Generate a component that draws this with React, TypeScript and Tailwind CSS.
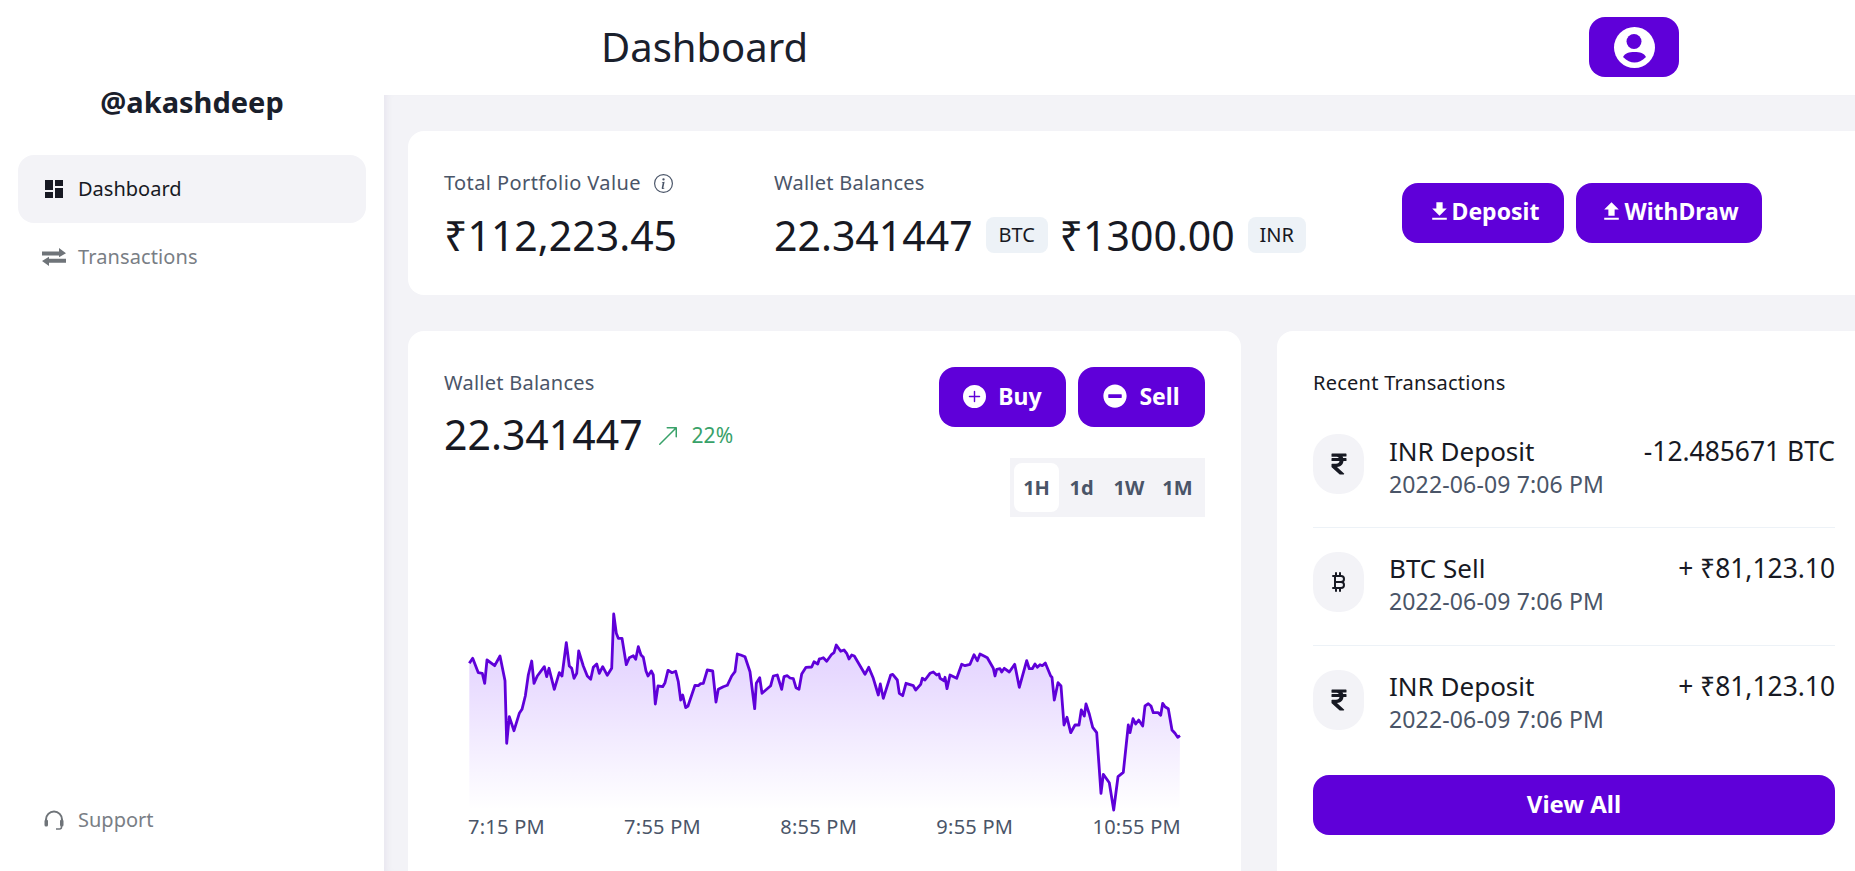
import React from "react";
import { MdDashboard, MdFileDownload, MdFileUpload } from "react-icons/md";
import { BsInfoCircle, BsArrowUpRight, BsPlusCircleFill } from "react-icons/bs";
import { FaMinusCircle, FaRupeeSign } from "react-icons/fa";
import { TbCurrencyBitcoin } from "react-icons/tb";

const left: number[][] = [[58,220],[68,205],[85,248],[97,250],[104,280],[111,210],[134,227],[150,198],[165,272],[170,460],[178,380],[192,422],[208,370],[216,358],[226,318],[235,255],[245,213],[252,280],[262,258],[283,230],[290,260],[297,235],[313,298],[328,248],[336,258],[349,158],[358,228],[365,235],[372,265],[380,250],[386,183],[400,228],[412,258],[422,268],[430,232],[440,222],[448,250],[458,230],[472,256],[485,235],[491,72],[499,130],[505,145],[516,145],[529,224],[538,203],[550,197],[557,208],[565,170],[573,195],[580,202],[588,243],[594,258],[604,243],[610,255],[616,342],[624,288],[638,290],[645,278],[654,241],[666,248],[677,244],[685,275],[692,330],[698,315],[707,353],[714,348],[735,286],[745,287],[752,281],[760,280],[772,240],[788,243],[798,336],[805,298],[820,290],[832,286],[845,258],[855,245],[862,192],[872,195],[885,200],[900,245],[914,356],[919,280],[929,263],[936,310],[962,287],[970,258],[982,255],[995,298],[1002,260],[1012,257],[1020,264],[1030,266],[1038,293],[1047,298],[1055,252],[1068,232],[1085,231],[1092,215],[1103,222],[1108,207]];
const right: number[][] = [[0,207],[10,203],[20,214],[35,193],[42,188],[49,165],[62,184],[72,180],[80,190],[87,207],[95,195],[103,198],[135,253],[146,232],[160,265],[175,315],[181,282],[190,325],[212,255],[218,253],[232,270],[238,310],[248,317],[258,280],[280,287],[287,300],[302,283],[307,265],[315,270],[330,250],[340,246],[350,255],[357,252],[360,265],[372,272],[375,262],[381,296],[390,255],[410,265],[425,223],[435,227],[450,223],[462,194],[472,212],[480,192],[492,198],[502,203],[520,235],[525,258],[530,238],[540,236],[545,246],[553,235],[568,246],[584,223],[598,292],[620,212],[628,236],[637,236],[645,222],[652,232],[660,224],[667,227],[676,219],[692,258],[696,262],[703,330],[714,278],[723,288],[732,405],[741,382],[752,428],[765,405],[777,405],[784,360],[793,378],[798,342],[808,372],[818,412],[830,428],[843,610],[850,553],[868,578],[881,660],[894,560],[910,547],[925,405],[930,428],[939,386],[947,402],[956,390],[968,408],[975,348],[985,341],[993,348],[1000,368],[1015,368],[1022,376],[1028,340],[1035,350],[1045,356],[1056,420],[1065,430],[1073,442],[1080,437]];

const pts = [
  ...left.map(([x, y]) => [450 + x / 3 - 465, 590 + y / 3 - 612]),
  ...right.map(([x, y]) => [820 + x / 3 - 465, 590 + y / 3 - 612]),
].map(([x, y]) => `${x.toFixed(1)},${y.toFixed(1)}`);
const line = pts.join(" ");
const area = `M${pts[0]} L${pts.slice(1).join(" L")} L714.5,198 L4.3,198 Z`;

function UserIcon() {
  return (
    <svg width="41" height="41" viewBox="0 0 41 41">
      <circle cx="20.5" cy="20.5" r="20.5" fill="#fff" />
      <circle cx="20" cy="14.5" r="7.5" fill="#5f00d9" />
      <path d="M9 30C11 26 15 25 20.5 25S30 26 32 30C28 34 24.5 35.5 20.5 35.5S13 34 9 30Z" fill="#5f00d9" />
    </svg>
  );
}
function SwapIcon() {
  return (
    <svg width="24" height="18" viewBox="0 0 24 18" fill="#6f7479">
      <path d="M0 3.4H17V0L24 5.2L17 9.2V7.4H0Z" />
      <path d="M24 10.8H7V8.8L0 13L7 18V14.8H24Z" />
    </svg>
  );
}
function SupportIcon() {
  return (
    <svg width="20" height="20" viewBox="0 0 20 20" fill="none">
      <path d="M2 11V9.5a8 8 0 0 1 16 0V11" stroke="#6f7479" strokeWidth="2" />
      <rect x="0.5" y="9.5" width="3.5" height="7" rx="1.5" fill="#6f7479" />
      <rect x="16" y="9.5" width="3.5" height="7" rx="1.5" fill="#6f7479" />
      <path d="M17.5 16v1a2 2 0 0 1-2 2H12" stroke="#6f7479" strokeWidth="1.6" />
    </svg>
  );
}

const rows = [
  { icon: <FaRupeeSign size={24} />, t: "INR Deposit", a: "-12.485671 BTC" },
  { icon: <TbCurrencyBitcoin size={24} strokeWidth={2} />, t: "BTC Sell", a: "+ ₹81,123.10" },
  { icon: <FaRupeeSign size={24} />, t: "INR Deposit", a: "+ ₹81,123.10" },
];

export default function App() {
  return (
    <div className="flex h-screen w-screen overflow-hidden bg-white font-['Noto_Sans',sans-serif] text-[#171923]">
      <aside className="flex w-[384px] shrink-0 flex-col px-[18px] pb-[37px] pt-[84px]">
        <h1 className="text-center text-[29px] font-bold leading-[36px] text-[#1a202c]">@akashdeep</h1>
        <nav className="mt-[35px] flex flex-col">
          <a className="flex h-[68px] items-center gap-[12px] rounded-2xl bg-[#f3f3f7] pl-[24px] text-[20px] text-[#171923]">
            <MdDashboard size={24} />
            Dashboard
          </a>
          <a className="flex h-[68px] items-center gap-[12px] pl-[24px] text-[20px] tracking-[0.1px] text-[#797e85]">
            <SwapIcon />
            Transactions
          </a>
        </nav>
        <a className="mt-auto flex items-center gap-[14px] pl-[26px] text-[20px] leading-[28px] text-[#797e85]">
          <SupportIcon />
          Support
        </a>
      </aside>

      <div className="flex min-w-0 flex-1 flex-col">
        <header className="flex h-[95px] shrink-0 items-center pb-[1px] pl-[217px] pr-[176px]">
          <h2 className="text-[40px] leading-[48px] text-[#1a202c]">Dashboard</h2>
          <button className="ml-auto flex h-[60px] w-[90px] items-center justify-center rounded-2xl bg-[#5f00d9]">
            <UserIcon />
          </button>
        </header>

        <main className="min-h-0 flex-1 overflow-hidden bg-[#f3f3f7] pl-[24px] pt-[36px] shadow-[inset_7px_0_8px_-6px_rgba(60,30,120,0.08)]">
          <div className="flex w-[1463px] flex-col gap-[36px]">
            <section className="flex h-[164px] items-center rounded-2xl bg-white px-[36px] pt-[2px]">
              <div className="w-[330px]">
                <div className="flex items-center gap-[13px] text-[20px] leading-[28px] tracking-[0.4px] text-[#4a5568]">
                  Total Portfolio Value <BsInfoCircle size={19} />
                </div>
                <div className="mt-[14px] text-[41px] leading-[48px]">₹112,223.45</div>
              </div>
              <div className="w-[628px]">
                <div className="text-[20px] leading-[28px] tracking-[0.25px] text-[#4a5568]">Wallet Balances</div>
                <div className="mt-[14px] flex items-center gap-[13px] text-[41px] leading-[48px]">
                  <span>22.341447</span>
                  <span className="flex h-[36px] w-[62px] items-center justify-center rounded-lg bg-[#edf2f7] text-[20px]">BTC</span>
                  <span className="-ml-[1px]">₹1300.00</span>
                  <span className="flex h-[36px] w-[58px] items-center justify-center rounded-lg bg-[#edf2f7] text-[20px]">INR</span>
                </div>
              </div>
              <div className="-mt-[2px] flex gap-[12px]">
                <button className="flex h-[60px] w-[162px] items-center justify-center rounded-2xl bg-[#5f00d9] pb-[3px] text-[23px] font-bold text-white">
                  <MdFileDownload size={25} />
                  Deposit
                </button>
                <button className="flex h-[60px] w-[186px] items-center justify-center rounded-2xl bg-[#5f00d9] pb-[3px] text-[23px] font-bold text-white">
                  <MdFileUpload size={25} />
                  WithDraw
                </button>
              </div>
            </section>

            <div className="flex gap-[36px]">
              <section className="h-[600px] w-[833px] shrink-0 rounded-2xl bg-white px-[36px] pt-[36px]">
                <div className="flex items-start justify-between">
                  <div>
                    <div className="text-[20px] leading-[32px] tracking-[0.25px] text-[#4a5568]">Wallet Balances</div>
                    <div className="mt-[11px] flex items-center">
                      <span className="text-[41px] leading-[48px]">22.341447</span>
                      <BsArrowUpRight size={24} className="ml-[13px] mt-[4px] text-[#38a169]" />
                      <span className="ml-[12px] mt-[4px] text-[21px] text-[#38a169]">22%</span>
                    </div>
                  </div>
                  <div className="flex flex-col items-end gap-[31px]">
                    <div className="flex gap-[12px]">
                      <button className="flex h-[60px] w-[127px] items-center justify-center gap-[12px] rounded-2xl bg-[#5f00d9] pb-[2px] text-[23px] font-bold text-white">
                        <BsPlusCircleFill size={23} />
                        Buy
                      </button>
                      <button className="flex h-[60px] w-[127px] items-center justify-center gap-[12px] rounded-2xl bg-[#5f00d9] pb-[2px] text-[23px] font-bold text-white">
                        <FaMinusCircle size={24} />
                        Sell
                      </button>
                    </div>
                    <div className="flex h-[59px] w-[195px] items-center bg-[#f3f3f7] px-[4px] text-[20px] font-bold text-[#4a5568]">
                      <span className="flex h-[49px] w-[45px] items-center justify-center rounded-lg bg-white">1H</span>
                      <span className="flex w-[45px] justify-center">1d</span>
                      <span className="flex w-[50px] justify-center">1W</span>
                      <span className="flex w-[47px] justify-center">1M</span>
                    </div>
                  </div>
                </div>
                <svg width="720" height="200" viewBox="0 0 720 200" className="ml-[21px] mt-[95px] block">
                  <defs>
                    <linearGradient id="fade" gradientUnits="userSpaceOnUse" x1="0" y1="2" x2="0" y2="198">
                      <stop offset="0" stopColor="#5f00ff" stopOpacity="0.18" />
                      <stop offset="0.3" stopColor="#5f00ff" stopOpacity="0.15" />
                      <stop offset="1" stopColor="#5f00ff" stopOpacity="0" />
                    </linearGradient>
                  </defs>
                  <path d={area} fill="url(#fade)" />
                  <polyline points={line} fill="none" stroke="#5f00d9" strokeWidth="2.8" strokeLinejoin="round" />
                </svg>
                <div className="ml-[24px] mt-[1px] flex w-[713px] justify-between text-[20px] leading-[28px] tracking-[0.25px] text-[#4a5568]">
                  <span>7:15 PM</span>
                  <span>7:55 PM</span>
                  <span>8:55 PM</span>
                  <span>9:55 PM</span>
                  <span>10:55 PM</span>
                </div>
              </section>

              <section className="h-[600px] w-[594px] shrink-0 rounded-2xl bg-white px-[36px] pt-[36px]">
                <div className="text-[20px] leading-[32px] tracking-[0.25px] text-[#171923]">Recent Transactions</div>
                <div className="mt-[35px]">
                  {rows.map((r, i) => (
                    <div key={i} className={"flex items-start gap-[25px] " + (i < 2 ? "mb-[24px] h-[94px] border-b border-[#edf2f7]" : "h-[105px]")}>
                      <div className="flex h-[60px] w-[51px] shrink-0 items-center justify-center rounded-[24px] bg-[#f3f3f7]">
                        {r.icon}
                      </div>
                      <div className={"flex-1 " + (i === 0 ? "-mt-[1px]" : "-mt-[2px]")}>
                        <div className="text-[26px] leading-[36px]">{r.t}</div>
                        <div className="text-[23px] leading-[30px] tracking-[0.15px] text-[#4a5568]">2022-06-09 7:06 PM</div>
                      </div>
                      <div className={"text-[26.4px] leading-[36px] " + (i === 0 ? "-mt-[1px]" : "-mt-[2px]")}>{r.a}</div>
                    </div>
                  ))}
                </div>
                <button className="h-[60px] w-full rounded-2xl bg-[#5f00d9] pb-[2px] text-[24px] font-bold text-white">View All</button>
              </section>
            </div>
          </div>
        </main>
      </div>
    </div>
  );
}
